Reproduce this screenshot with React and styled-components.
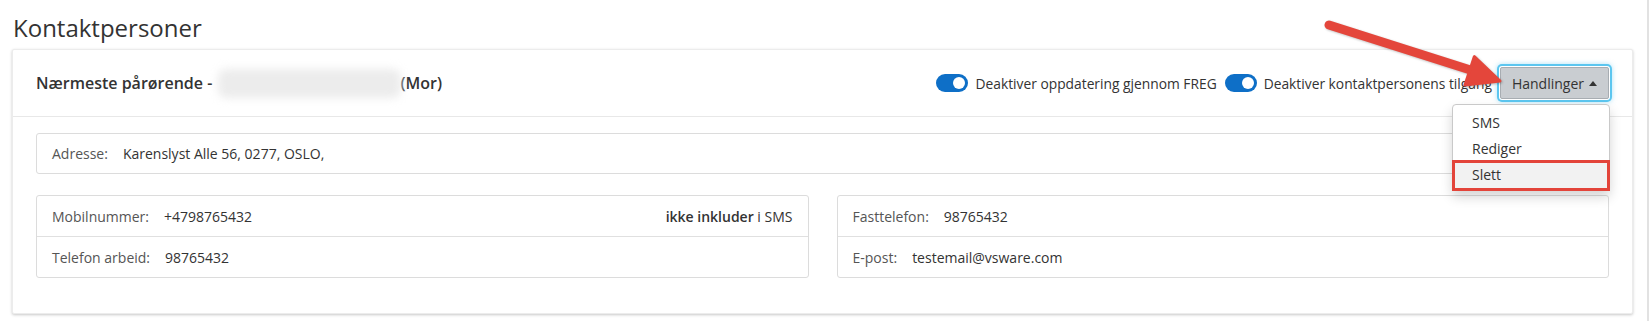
import React from 'react'
import styled, { createGlobalStyle } from 'styled-components'

const GlobalStyle = createGlobalStyle`
  html, body {
    margin: 0;
    padding: 0;
    background: #fff;
  }
  body {
    font-family: "Open Sans", "Liberation Sans", sans-serif;
    color: #333;
  }
`

const Page = styled.div`
  position: relative;
  display: flex;
  width: 1651px;
  height: 321px;
  overflow: hidden;
`

const Main = styled.div`
  flex: 1;
  min-width: 0;
  padding: 13px 0 0 12px;
`

const Edge = styled.div`
  width: 2px;
  margin: 0 2px 0 14px;
  background: #e2e2e2;
`

const Title = styled.h1`
  margin: 0 0 7px 1px;
  font-size: 24px;
  line-height: 29px;
  font-weight: 400;
  color: #333;
`

const Card = styled.div`
  background: #fff;
  border: 1px solid #ececec;
  border-radius: 2px;
  box-shadow: 0 1px 3px rgba(0, 0, 0, 0.22);
`

const Header = styled.div`
  display: flex;
  align-items: center;
  height: 66px;
  padding: 0 23px;
  border-bottom: 1px solid #e8e8e8;
`

const HeaderTitle = styled.div`
  display: flex;
  align-items: center;
  font-size: 16px;
  font-weight: 600;
  color: #333;
  white-space: pre;
`

const Blurred = styled.span`
  display: inline-block;
  width: 183px;
  height: 29px;
  margin-left: 1px;
  background: #ececec;
  border-radius: 8px;
  filter: blur(4px);
`

const Controls = styled.div`
  display: flex;
  align-items: center;
  margin-left: auto;
`

const Toggle = styled.span`
  display: flex;
  align-items: center;
  justify-content: flex-end;
  box-sizing: border-box;
  width: 32px;
  height: 18px;
  padding: 0 3px;
  border-radius: 9px;
  background: #0e6fc7;

  span {
    width: 12px;
    height: 12px;
    border-radius: 50%;
    background: #fff;
  }
`

const ToggleLabel = styled.span`
  margin: 0 8px 0 7px;
  font-size: 13.8px;
  font-weight: 500;
  color: #333;
  white-space: nowrap;
`

const Dropdown = styled.div`
  position: relative;
`

const ActionButton = styled.button`
  display: flex;
  align-items: center;
  gap: 5px;
  height: 32px;
  padding: 0 11px;
  border: 1px solid #a8adb2;
  border-radius: 2px;
  background: #c9cdd1;
  font-family: inherit;
  font-size: 14px;
  color: #333;
  box-shadow: 0 0 0 1px #fff, 0 0 0 3px #5cc6ef, 0 0 5px 3px rgba(92, 198, 239, 0.5);
`

const Caret = styled.span`
  width: 0;
  height: 0;
  border-left: 4px solid transparent;
  border-right: 4px solid transparent;
  border-bottom: 5px solid #333;
`

const Menu = styled.div`
  position: absolute;
  top: calc(100% + 5px);
  right: -1px;
  z-index: 5;
  width: 158px;
  box-sizing: border-box;
  padding: 5px 0 2px;
  background: #fff;
  border: 1px solid #c9c9c9;
  border-radius: 4px;
  box-shadow: 0 6px 12px rgba(0, 0, 0, 0.17);
`

const MenuItem = styled.div`
  position: relative;
  height: 26px;
  line-height: 26px;
  padding: 0 19px;
  font-size: 14px;
  color: #333;
  background: ${p => (p.$active ? '#f2f2f2' : 'transparent')};

  ${p => p.$marked && `
    &::after {
      content: '';
      position: absolute;
      inset: -2px -1px -3px -1px;
      border: 3px solid #e3443a;
    }
  `}
`

const Body = styled.div`
  padding: 16px 23px 35px;
`

const InfoBox = styled.div`
  border: 1px solid #dcdcdc;
  border-radius: 3px;
`

const Row = styled.div`
  display: flex;
  align-items: center;
  height: ${p => (p.$short ? '39px' : '40px')};
  padding: 0 15px;
  font-size: 14px;

  & + & {
    border-top: 1px solid #e0e0e0;
  }
`

const Label = styled.span`
  color: #555;
  margin-right: 15px;
`

const Value = styled.span`
  color: #333;
`

const Note = styled.span`
  margin-left: auto;
  color: #333;

  b {
    font-weight: 600;
  }
`

const Columns = styled.div`
  display: grid;
  grid-template-columns: 1fr 1fr;
  gap: 28px;
  margin-top: 21px;
`

const Annotation = styled.svg`
  position: absolute;
  top: 0;
  left: 0;
  width: 1651px;
  height: 321px;
  pointer-events: none;
  z-index: 10;
  filter: drop-shadow(1px 1px 1px rgba(0, 0, 0, 0.25));
`

const App = () => {
  return (
    <Page>
      <GlobalStyle />
      <Main>
        <Title>Kontaktpersoner</Title>
        <Card>
          <Header>
            <HeaderTitle>
              {'Nærmeste pårørende - '}
              <Blurred />
              (Mor)
            </HeaderTitle>
            <Controls>
              <Toggle><span /></Toggle>
              <ToggleLabel>Deaktiver oppdatering gjennom FREG</ToggleLabel>
              <Toggle><span /></Toggle>
              <ToggleLabel>Deaktiver kontaktpersonens tilgang</ToggleLabel>
              <Dropdown>
                <ActionButton>
                  Handlinger <Caret />
                </ActionButton>
                <Menu>
                  <MenuItem>SMS</MenuItem>
                  <MenuItem>Rediger</MenuItem>
                  <MenuItem $active $marked>Slett</MenuItem>
                </Menu>
              </Dropdown>
            </Controls>
          </Header>
          <Body>
            <InfoBox>
              <Row $short>
                <Label>Adresse:</Label>
                <Value>Karenslyst Alle 56, 0277, OSLO,</Value>
              </Row>
            </InfoBox>
            <Columns>
              <InfoBox>
                <Row>
                  <Label>Mobilnummer:</Label>
                  <Value>+4798765432</Value>
                  <Note><b>ikke inkluder</b> i SMS</Note>
                </Row>
                <Row>
                  <Label>Telefon arbeid:</Label>
                  <Value>98765432</Value>
                </Row>
              </InfoBox>
              <InfoBox>
                <Row>
                  <Label>Fasttelefon:</Label>
                  <Value>98765432</Value>
                </Row>
                <Row>
                  <Label>E-post:</Label>
                  <Value>testemail@vsware.com</Value>
                </Row>
              </InfoBox>
            </Columns>
          </Body>
        </Card>
      </Main>
      <Edge />
      <Annotation viewBox="0 0 1651 321">
        <line x1="1329" y1="25" x2="1472" y2="70.5" stroke="#e4463b" strokeWidth="9" strokeLinecap="round" />
        <polygon points="1500,81 1474.3,56.7 1464.9,85.1" fill="#e4463b" stroke="#e4463b" strokeWidth="3" strokeLinejoin="round" />
      </Annotation>
    </Page>
  )
}

export default App
